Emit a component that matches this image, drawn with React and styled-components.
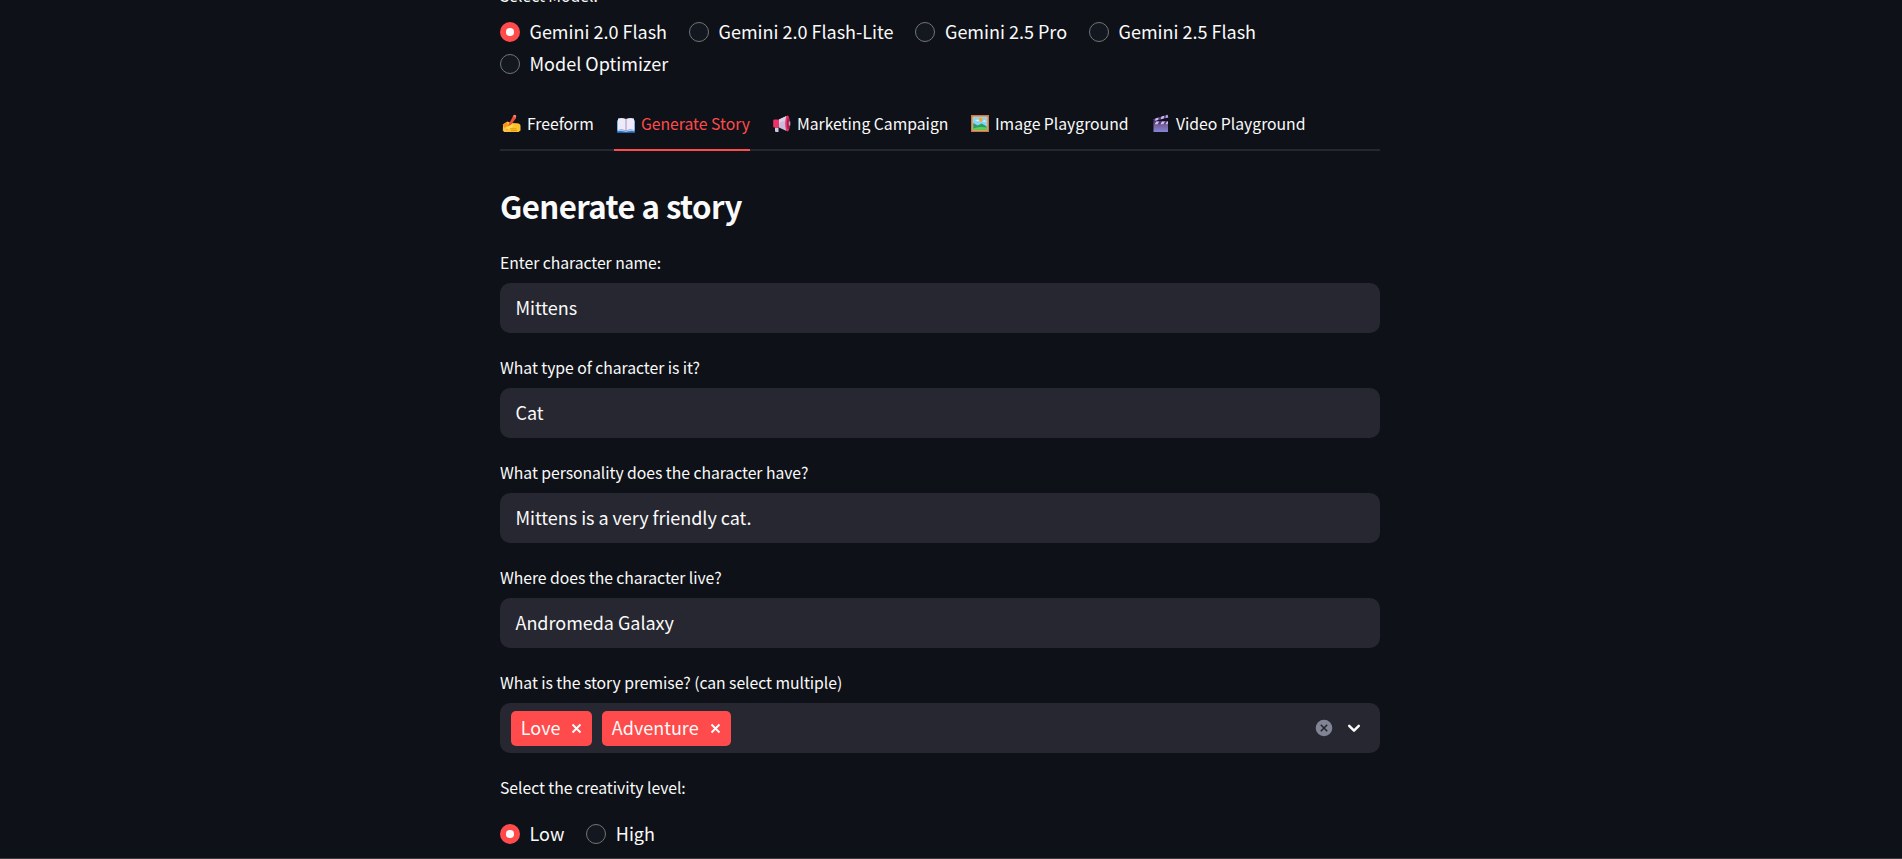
import React from "react";
import styled, { createGlobalStyle, css } from "styled-components";

const GlobalStyle = createGlobalStyle`
  * { box-sizing: border-box; }
  html, body { margin: 0; height: 100%; overflow: hidden; background: #0e1117; }
  body {
    color: #fafafa;
    font-family: "Noto Sans CJK SC", "Noto Sans", sans-serif;
    font-size: 18px;
  }
`;

const Page = styled.main`
  height: 859px;
  overflow: hidden;
  padding-left: 500px;
  border-bottom: 1px solid #3b3b3d;
`;

const Column = styled.div`
  width: 880px;
  margin-top: -19px;
  display: flex;
  flex-direction: column;
`;

const Label = styled.label`
  display: flex;
  align-items: center;
  height: 30px;
  font-size: 15.75px;
  line-height: 28px;
  white-space: nowrap;
  letter-spacing: -0.045px;
`;

const RadioGroup = styled.div`
  display: flex;
  flex-wrap: wrap;
  column-gap: 22px;
  row-gap: 2px;
  margin-top: ${(p) => p.$top}px;
`;

const RadioOption = styled.label`
  display: flex;
  align-items: center;
  gap: 9.5px;
  height: 30px;
  white-space: nowrap;
`;

const RadioText = styled.span`
  line-height: 28px;
  padding-bottom: 2px;
`;

const RadioMark = styled.span`
  width: 20px;
  height: 20px;
  border-radius: 50%;
  display: grid;
  place-items: center;
  ${(p) =>
    p.$checked
      ? css`
          background: #ff4b4b;
          &::after {
            content: "";
            width: 7.5px;
            height: 7.5px;
            border-radius: 50%;
            background: #fafafa;
          }
        `
      : css`
          background: #131720;
          border: 1px solid #747474;
        `}
`;

const TabList = styled.nav`
  display: flex;
  gap: 20px;
  height: 50px;
  margin-top: 22px;
  border-bottom: 2px solid #262730;
`;

const Tab = styled.a`
  display: flex;
  align-items: center;
  gap: 5px;
  height: 50px;
  width: ${(p) => p.$width}px;
  padding-bottom: 4px;
  font-size: 15.75px;
  white-space: nowrap;
  letter-spacing: -0.02px;
  color: ${(p) => (p.$active ? "#ff4b4b" : "#fafafa")};
  border-bottom: 2px solid ${(p) => (p.$active ? "#ff4b4b" : "transparent")};

  svg { flex: none; }
`;

const Heading = styled.h3`
  margin: 34px 0 22px;
  height: 41px;
  line-height: 41px;
  font-size: 31.2px;
  font-weight: 600;
  letter-spacing: -0.58px;
`;

const Form = styled.form`
  display: flex;
  flex-direction: column;
  gap: 20px;
`;

const Field = styled.div`
  display: flex;
  flex-direction: column;
  gap: 5px;
`;

const Box = styled.div`
  display: flex;
  align-items: center;
  height: 50px;
  border-radius: 10px;
  background: #262730;
  padding: 0 15.5px 2px;
  white-space: nowrap;
  letter-spacing: -0.03px;
`;

const SelectBox = styled(Box)`
  padding: 0 16px 0 11px;
  letter-spacing: 0;
`;

const Tags = styled.div`
  display: flex;
  gap: 10px;
  flex: 1;
`;

const Tag = styled.span`
  display: flex;
  align-items: center;
  justify-content: space-between;
  width: ${(p) => p.$width}px;
  height: 35px;
  padding: 0 9px 0 9.8px;
  border-radius: 5px;
  background: #ff4b4b;
`;

const TagText = styled.span`
  line-height: 33px;
  padding-bottom: 2px;
`;

const Controls = styled.div`
  display: flex;
  align-items: center;
  gap: 10px;
`;

const WritingHand = () => (
  <svg width="22" height="22" viewBox="0 0 22 22">
    <path d="M3 12.5 7.5 9.5 11 11l6 .3c2 .2 3.5 1 3.5 2.6v4.6l-2 1.5H4.500c-1.500-.8-2-1.700-1.600-2.700z" fill="#fdc32f" />
    <path d="M2.600 12.600 7 9.700l1 3.800L4.500 16z" fill="#f7941e" />
    <path d="M5 19.500 13.500 3.200l2.600.8-.2 2.300-7.400 10.200z" fill="#e8503a" />
    <path d="M13 4.200 14.200 2.700l2 .8-.2 2z" fill="#f98a78" />
    <path d="m6.500 15 5-2.500 2 1.500-4 3.200H6z" fill="#ffda4c" />
    <path d="M10 16.800h6.500M11 18.600h6" stroke="#d98b12" strokeWidth=".8" />
    <path d="m4 20 1.600-3.200 1.600 1.500z" fill="#f6c48c" />
  </svg>
);

const OpenBook = () => (
  <svg width="22" height="22" viewBox="0 0 22 22">
    <path d="M3 8.500h18v12.300H3z" fill="#2d75c4" />
    <path d="M3 8.500h1v10H3zM20 8.500h1v10h-1z" fill="#6fb3ee" />
    <path d="M4 6.500q4.500-1 8 .6V18.500q-4-1.500-8-.5zM20 6.500q-4.500-1-8 .6V18.500q4-1.500 8-.5z" fill="#efeafa" />
    <path d="M4 18q4-1 8 .8 4-1.800 8-.8v1.200q-4-.6-8 .8-4-1.400-8-.8z" fill="#a9c8f0" />
    <path d="M12 7V19.500" stroke="#aaa3cc" strokeWidth="1.200" />
  </svg>
);

const Megaphone = () => (
  <svg width="22" height="22" viewBox="0 0 22 22">
    <path d="M5 15.500h3.500v4.500H6q-1 0-1-1z" fill="#cfc5df" />
    <path d="M3.200 8.500q0-1 1-1H9v8H4.200q-1 0-1-1z" fill="#ee3268" />
    <path d="M9 7.500 16.500 4v15L9 15.500z" fill="#c9bddc" />
    <path d="M9 7.500 16.500 4v4L9 11z" fill="#ddd3e8" />
    <ellipse cx="17.500" cy="11.500" rx="2.300" ry="8" fill="#ee3268" />
    <ellipse cx="18.200" cy="11.500" rx="1.300" ry="6" fill="#a91e4d" />
    <path d="M18.800 9.500h1.500v4h-1.500z" fill="#b9a9cc" />
  </svg>
);

const Picture = () => (
  <svg width="22" height="22" viewBox="0 0 22 22">
    <path d="M3 3h18v17H3z" fill="#c47a4b" />
    <path d="M4.500 4.500h15v14h-15z" fill="#f4c08b" />
    <path d="M5.200 5.200h13.600v12.600H5.200z" fill="#86d4f5" />
    <path d="m5.200 11 4.500 2.500 4-2 5.100 3v3.300H5.200z" fill="#2a9d66" />
    <path d="M5.200 16.500q5-2.500 13.600-1v2.300H5.200z" fill="#63cf4c" />
    <circle cx="12.700" cy="7.700" r="2" fill="#f5a623" />
    <path d="m7 9 3-1.800 2 2zm7 .5 2.500-1.500 2 2z" fill="#d9f2fc" />
  </svg>
);

const Clapper = () => (
  <svg width="22" height="22" viewBox="0 0 22 22">
    <defs>
      <linearGradient id="slate" x1="0" y1="0" x2="0" y2="1">
        <stop offset="0" stopColor="#6a4a78" />
        <stop offset="1" stopColor="#8585d6" />
      </linearGradient>
    </defs>
    <path d="m4 7.200 14.500-4.500.8 2.700L5 9.200z" fill="#5b4285" />
    <path d="m6.500 6.500 3-1L9 8l-3 .8zm6-2 2.800-.8-.7 2.700-2.800.8z" fill="#cdbdf3" />
    <path d="m17 3.200 1.500-.5.800 2.700-2.700.7z" fill="#b9a4ea" />
    <path d="M4.500 9.300h14.500V20H4.500z" fill="url(#slate)" />
    <path d="M4.500 9.300h14.500v2.900H4.500z" fill="#513a72" />
    <path d="m7.200 9.500h3l-1.600 2.700h-3zm5.800 0h3l-1.600 2.700h-3zm5 0h1v1.700l-.6 1h-2z" fill="#cdbdf3" />
  </svg>
);

const RemoveIcon = () => (
  <svg width="13" height="13" viewBox="0 0 13 13">
    <path d="m2.500 2.500 8 8m0-8-8 8" stroke="#fff" strokeWidth="1.900" />
  </svg>
);

const ClearIcon = () => (
  <svg width="20" height="20" viewBox="0 0 20 20">
    <circle cx="10" cy="10" r="8.300" fill="#808495" />
    <path d="m6.800 6.800 6.400 6.400m0-6.400-6.400 6.400" stroke="#262730" strokeWidth="1.600" />
  </svg>
);

const ChevronIcon = () => (
  <svg width="20" height="20" viewBox="0 0 20 20">
    <path d="m5.200 7.800 4.800 4.800 4.800-4.800" fill="none" stroke="#fafafa" strokeWidth="2.500" strokeLinecap="round" strokeLinejoin="round" />
  </svg>
);

const models = [
  ["Gemini 2.0 Flash", true],
  ["Gemini 2.0 Flash-Lite"],
  ["Gemini 2.5 Pro"],
  ["Gemini 2.5 Flash"],
  ["Model Optimizer"],
];

const tabs = [
  ["Freeform", WritingHand, 94],
  ["Generate Story", OpenBook, 136, true],
  ["Marketing Campaign", Megaphone, 178],
  ["Image Playground", Picture, 161],
  ["Video Playground", Clapper, 156],
];

const fields = [
  ["Enter character name:", "Mittens"],
  ["What type of character is it?", "Cat"],
  ["What personality does the character have?", "Mittens is a very friendly cat."],
  ["Where does the character live?", "Andromeda Galaxy"],
];

const Radio = ({ label, checked }) => (
  <RadioOption>
    <RadioMark $checked={checked} />
    <RadioText>{label}</RadioText>
  </RadioOption>
);

export default function App() {
  return (
    <>
      <GlobalStyle />
      <Page>
        <Column>
          <Label>Select Model:</Label>
          <RadioGroup $top={6}>
            {models.map(([label, checked]) => (
              <Radio key={label} label={label} checked={checked} />
            ))}
          </RadioGroup>
          <TabList>
            {tabs.map(([label, Icon, width, active]) => (
              <Tab key={label} $width={width} $active={active}>
                <Icon />
                <span>{label}</span>
              </Tab>
            ))}
          </TabList>
          <Heading>Generate a story</Heading>
          <Form>
            {fields.map(([label, value]) => (
              <Field key={label}>
                <Label>{label}</Label>
                <Box>{value}</Box>
              </Field>
            ))}
            <Field>
              <Label>What is the story premise? (can select multiple)</Label>
              <SelectBox>
                <Tags>
                  <Tag $width={81}><TagText>Love</TagText><RemoveIcon /></Tag>
                  <Tag $width={129}><TagText>Adventure</TagText><RemoveIcon /></Tag>
                </Tags>
                <Controls>
                  <ClearIcon />
                  <ChevronIcon />
                </Controls>
              </SelectBox>
            </Field>
            <div>
              <Label>Select the creativity level:</Label>
              <RadioGroup $top={16}>
                <Radio label="Low" checked />
                <Radio label="High" />
              </RadioGroup>
            </div>
          </Form>
        </Column>
      </Page>
    </>
  );
}
